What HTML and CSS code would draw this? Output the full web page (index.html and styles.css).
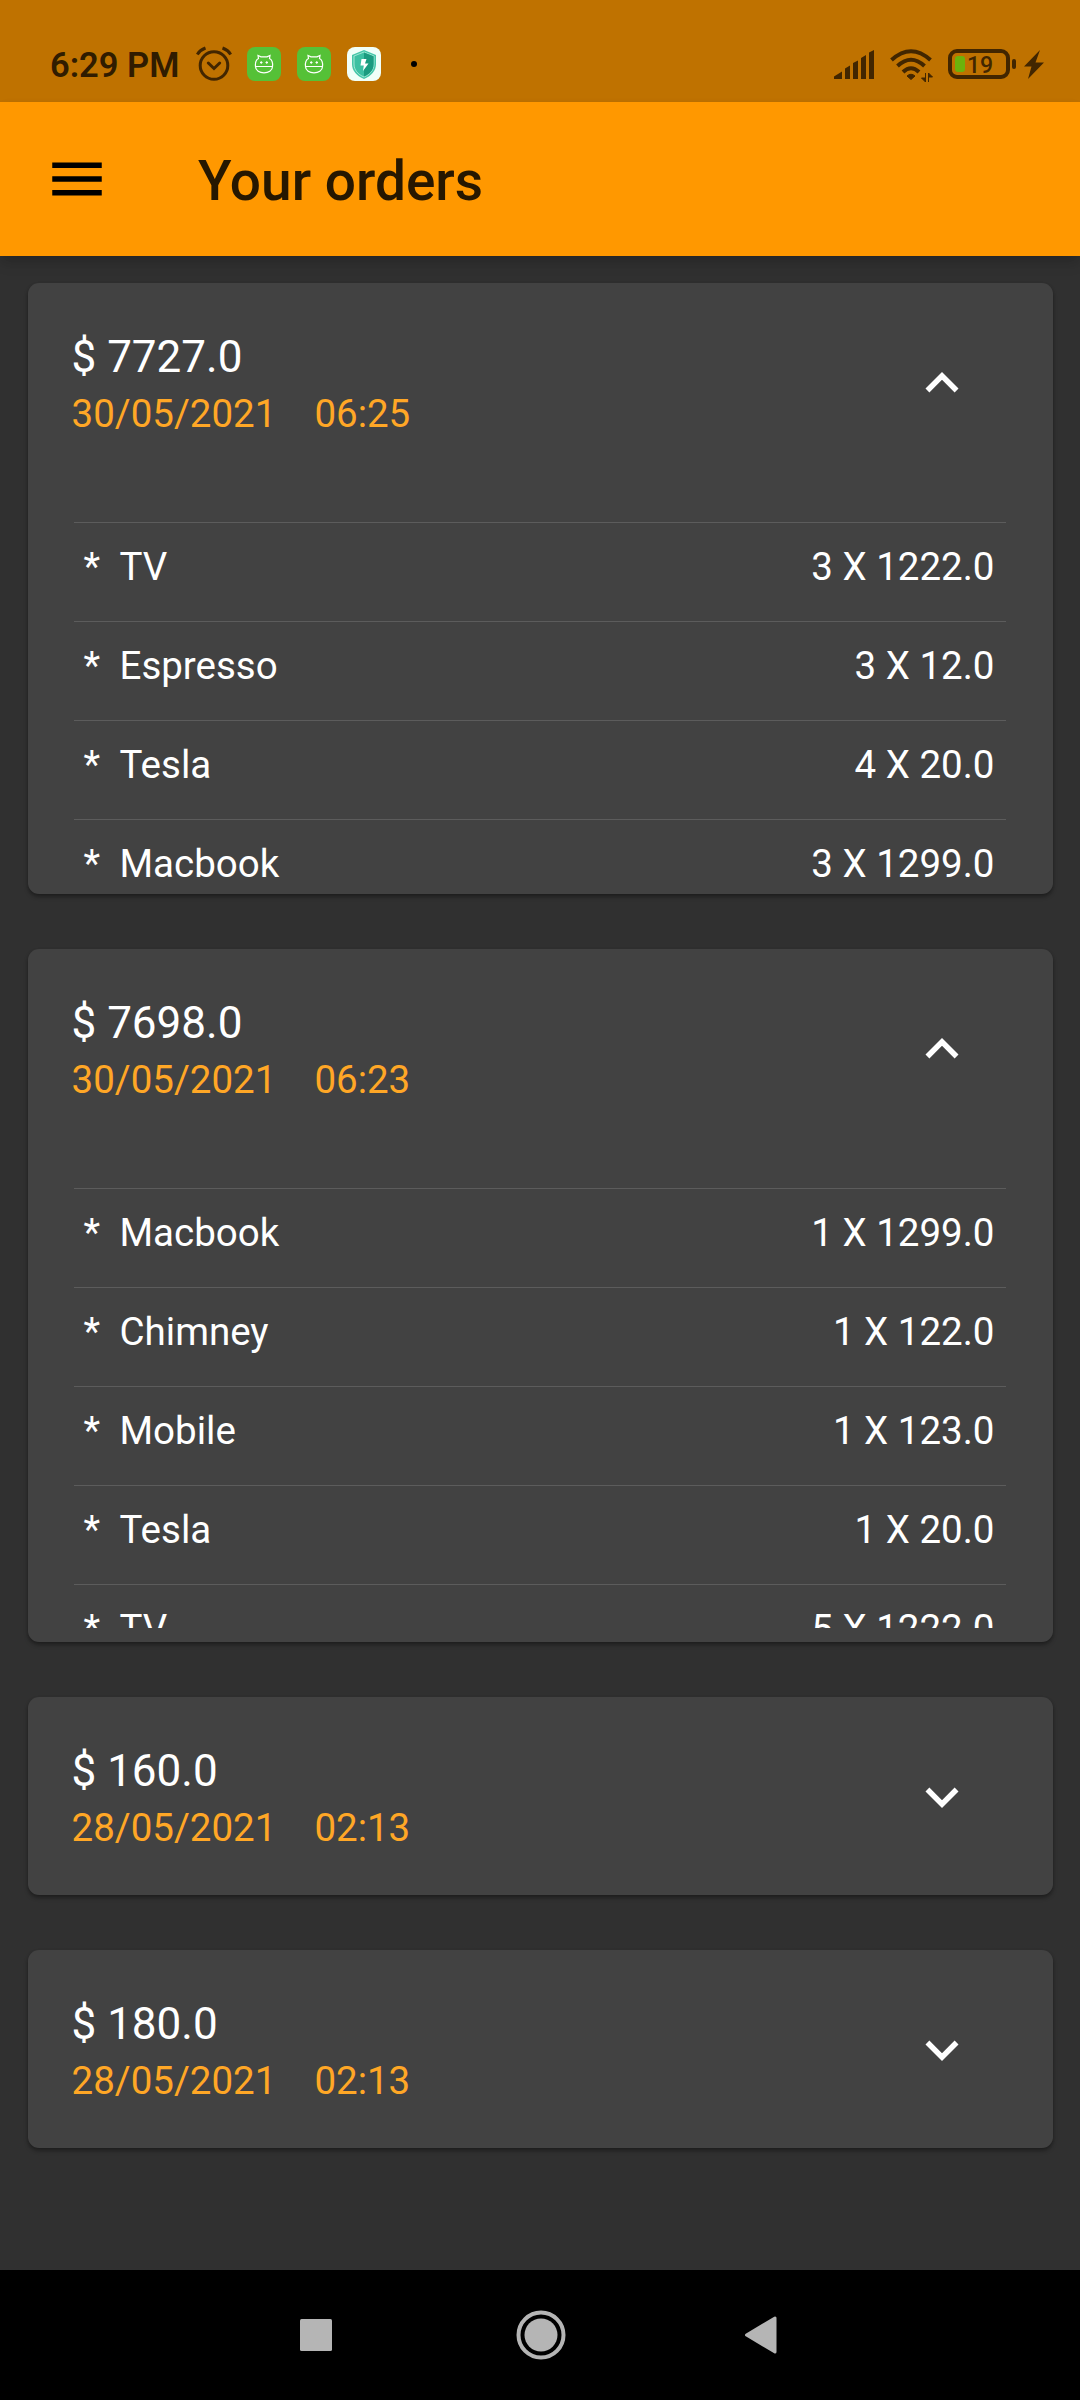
FILE: index.html
```
<!DOCTYPE html>
<html lang="en">
<head>
<meta charset="utf-8">
<title>Your orders</title>
<link rel="stylesheet" href="styles.css">
</head>
<body>
<div class="screen">
  <header class="status">
    <span class="clock">6:29 PM</span>
    <svg class="alarm" viewBox="0 0 36 36" width="36" height="36"><g fill="none" stroke="#422600" stroke-width="3"><circle cx="18" cy="19.5" r="13.8"/><path d="M12.3 17l5.7 5.5 5.7-5.5" stroke-linecap="round"/><path d="M1.3 8.5Q4 4 9.5 2M34.700 8.500Q32 4 26.500 2"/></g></svg>
    <svg class="app" viewBox="0 0 34 34" width="34" height="34"><rect width="34" height="34" rx="8" fill="#55c137"/><g fill="none" stroke="#fff" stroke-width="1.200"><path d="M8.500 19.500C8 15 9.500 12.500 11.500 11.500L11 8.500 14 9.800H20L23 8.500 22.500 11.500C24.500 12.500 26 15 25.500 19.500C25.500 28 8.500 28 8.500 19.500ZM8.500 19.500H25.500"/></g><path d="M13 15.500h2.500M14.250 14.300v2.500M18.500 15.500h2.500M19.750 14.300v2.500" stroke="#fff" stroke-width="1.200"/></svg>
    <svg class="app" viewBox="0 0 34 34" width="34" height="34"><rect width="34" height="34" rx="8" fill="#55c137"/><g fill="none" stroke="#fff" stroke-width="1.200"><path d="M8.500 19.500C8 15 9.500 12.500 11.500 11.500L11 8.500 14 9.800H20L23 8.500 22.500 11.500C24.500 12.500 26 15 25.500 19.500C25.500 28 8.500 28 8.500 19.500ZM8.500 19.500H25.500"/></g><path d="M13 15.500h2.500M14.250 14.300v2.500M18.500 15.500h2.500M19.750 14.300v2.500" stroke="#fff" stroke-width="1.200"/></svg>
    <svg class="app" viewBox="0 0 34 34" width="34" height="34"><rect width="34" height="34" rx="8" fill="#f0fff8"/><path d="M17 3L29 8V17C29 24 24 29 17 32C10 29 5 24 5 17V8Z" fill="#44c6a8"/><path d="M17 5L27 9V17C27 23 23 27.500 17 30C11 27.500 7 23 7 17V9Z" fill="#3cc0a2" stroke="#b8f0df" stroke-width=".8"/><path d="M17 5.500L26.600 9.300V17C26.600 23 23 27 17 29.500Z" fill="#1b9b7f"/><path d="M14.500 12h5l-1.500 4.500h3.500l-5.500 7.500 .8-5.500h-3.300z" fill="#fff"/></svg>
    <span class="dot"></span>
    <svg class="signal" viewBox="0 0 40 29" width="40" height="29"><path fill="#422600" d="M0 29V26.500L8 21.500V29ZM11 29V18.500L16 15.500V29ZM19 29V13L24 10.500V29ZM27 29V8L32 5V29ZM35 29V2.500L40 0V29Z"/></svg>
    <svg class="wifi" viewBox="0 0 44 34" width="44" height="34"><g fill="none" stroke="#422600" stroke-width="4"><path d="M1.500 11Q21 -6.500 40.500 11"/><path d="M7.500 17Q21 4.500 34.500 17"/><path d="M13 23Q21 15.500 29 23"/></g><path d="M17 27Q21 23.500 25 27L21 30.500Z" fill="#422600" stroke="#422600"/><path d="M35.500 24v9l-4-4h4M38.500 33v-9l4 4h-4" fill="#422600" stroke="#422600" stroke-width="1"/></svg>
    <span class="battery"><span class="level"></span><span class="percent">19</span></span>
    <span class="nub"></span>
    <svg class="bolt" viewBox="0 0 20 29" width="20" height="29"><path d="M16 0L0 16.500H7.500L4 29L20 12.500H11.500Z" fill="#422600"/></svg>
  </header>

  <nav class="appbar">
    <svg class="menu" viewBox="0 0 24 24" width="66" height="66"><path d="M3 18h18v-2H3v2zm0-5h18v-2H3v2zm0-7v2h18V6H3z"/></svg>
    <h1 class="title">Your orders</h1>
  </nav>

  <main class="orders">
    <section class="card card-first">
      <div class="summary">
        <div><div class="total">$ 7727.0</div><div class="when"><span>30/05/2021</span><span>06:25</span></div></div>
        <svg class="chevron" viewBox="0 0 24 24" width="66" height="66"><path d="M12 8l-6 6 1.410 1.410L12 10.830l4.590 4.580L18 14z"/></svg>
      </div>
      <ul class="items">
        <li><span class="star">*</span><span class="name">TV</span><span>3 X 1222.0</span></li>
        <li><span class="star">*</span><span class="name">Espresso</span><span>3 X 12.0</span></li>
        <li><span class="star">*</span><span class="name">Tesla</span><span>4 X 20.0</span></li>
        <li><span class="star">*</span><span class="name">Macbook</span><span>3 X 1299.0</span></li>
      </ul>
    </section>
    <section class="card card-second">
      <div class="summary">
        <div><div class="total">$ 7698.0</div><div class="when"><span>30/05/2021</span><span>06:23</span></div></div>
        <svg class="chevron" viewBox="0 0 24 24" width="66" height="66"><path d="M12 8l-6 6 1.410 1.410L12 10.830l4.590 4.580L18 14z"/></svg>
      </div>
      <ul class="items">
        <li><span class="star">*</span><span class="name">Macbook</span><span>1 X 1299.0</span></li>
        <li><span class="star">*</span><span class="name">Chimney</span><span>1 X 122.0</span></li>
        <li><span class="star">*</span><span class="name">Mobile</span><span>1 X 123.0</span></li>
        <li><span class="star">*</span><span class="name">Tesla</span><span>1 X 20.0</span></li>
        <li><span class="star">*</span><span class="name">TV</span><span>5 X 1222.0</span></li>
      </ul>
    </section>
    <section class="card">
      <div class="summary">
        <div><div class="total">$ 160.0</div><div class="when"><span>28/05/2021</span><span>02:13</span></div></div>
        <svg class="chevron" viewBox="0 0 24 24" width="66" height="66"><path d="M16.590 8.590L12 13.170 7.410 8.590 6 10l6 6 6-6z"/></svg>
      </div>
    </section>
    <section class="card">
      <div class="summary">
        <div><div class="total">$ 180.0</div><div class="when"><span>28/05/2021</span><span>02:13</span></div></div>
        <svg class="chevron" viewBox="0 0 24 24" width="66" height="66"><path d="M16.590 8.590L12 13.170 7.410 8.590 6 10l6 6 6-6z"/></svg>
      </div>
    </section>
  </main>

  <footer class="system">
    <svg viewBox="0 0 32 32" width="32" height="32"><rect width="32" height="32" rx="1.500"/></svg>
    <svg viewBox="0 0 50 50" width="50" height="50"><circle cx="25" cy="25" r="22.500" fill="none" stroke="#b5b5b5" stroke-width="4"/><circle cx="25" cy="25" r="16.500"/></svg>
    <svg viewBox="0 0 32 38" width="32" height="38"><path d="M1.500 19L30 2V36Z" stroke="#b5b5b5" stroke-width="3" stroke-linejoin="round"/></svg>
  </footer>
</div>
</body>
</html>
```
FILE: styles.css
```
* { box-sizing: border-box; }

body {
  margin: 0;
  background: #303030;
  font-family: Roboto, sans-serif;
}

svg { display: block; flex: none; }

.screen {
  display: flex;
  flex-direction: column;
  width: 1080px;
  height: 2400px;
  overflow: hidden;
}

/* Status bar */
.status {
  display: flex;
  align-items: center;
  flex: none;
  height: 102px;
  padding: 26px 0 0 50px;
  background: #bf7200;
  color: #301c00;
}

.clock {
  width: 129px;
  padding-top: 2px;
  font-size: 34.500px;
  font-weight: 600;
  line-height: 40px;
  white-space: nowrap;
}

.alarm { margin-left: 17px; }
.app { margin-left: 16px; }
.alarm + .app { margin-left: 15px; }

.dot {
  width: 6px;
  height: 6px;
  margin-left: 30px;
  border-radius: 50%;
  background: #000;
}

.signal { margin-left: 417px; }
.wifi { margin: 3px 0 0 16px; }

.battery {
  display: flex;
  align-items: center;
  width: 62px;
  height: 30px;
  margin-left: 14px;
  padding-left: 3px;
  border: 4px solid #422600;
  border-radius: 9px;
}

.level {
  width: 10px;
  height: 16px;
  border-radius: 3px;
  background: #6cb20b;
}

.percent {
  margin-left: 2px;
  padding-top: 2px;
  color: #422600;
  font-size: 23px;
  font-weight: 500;
  line-height: 23px;
}

.nub {
  width: 4px;
  height: 10px;
  margin-left: 2px;
  border-radius: 2px;
  background: #422600;
}

.bolt { margin-left: 8px; }

/* App bar */
.appbar {
  position: relative;
  display: flex;
  align-items: center;
  flex: none;
  height: 154px;
  padding-left: 44px;
  background: #ff9800;
  box-shadow: 0 5px 11px -3px rgba(0, 0, 0, .2), 0 8px 14px rgba(0, 0, 0, .08);
}

.title {
  margin: 4px 0 0 88px;
  color: #261700;
  font-size: 55px;
  font-weight: 500;
  line-height: 64px;
}

/* Order list */
.orders {
  display: flex;
  flex-direction: column;
  flex: 1;
  gap: 55px;
  padding: 27px 27.500px 0;
}

.card {
  flex: none;
  height: 198px;
  border-radius: 11px;
  background: #424242;
  box-shadow: 0 3px 4px rgba(0, 0, 0, .32), 0 1px 3px rgba(0, 0, 0, .12);
  color: #fff;
}

.card-first { height: 611px; }
.card-second { height: 693px; }

.summary {
  display: flex;
  justify-content: space-between;
  align-items: flex-start;
  height: 198px;
  padding: 47.500px 77.500px 0 44px;
}

.total {
  font-size: 44px;
  line-height: 52px;
}

.when {
  display: flex;
  gap: 38px;
  margin-top: 8px;
  color: #ffa726;
  font-size: 38.500px;
  line-height: 46px;
}

.chevron {
  margin-top: 19.500px;
  fill: #fff;
}

.items {
  height: 413px;
  margin: 0 46.500px;
  padding: 41px 0 0;
  overflow: hidden;
  list-style: none;
}

.card-second .items { height: 481px; }

.items li {
  display: flex;
  height: 99px;
  padding: 21px 11.500px 0 9.500px;
  border-top: 1px solid #5c5c5c;
  font-size: 38.500px;
  line-height: 46px;
}

.star { width: 36px; }
.name { flex: 1; }

/* System navigation */
.system {
  display: flex;
  align-items: center;
  flex: none;
  height: 130px;
  padding-left: 300px;
  background: #000;
  fill: #b5b5b5;
}

.system svg + svg { margin-left: 183.500px; }
.system svg:last-child { margin-left: 179px; }
```
